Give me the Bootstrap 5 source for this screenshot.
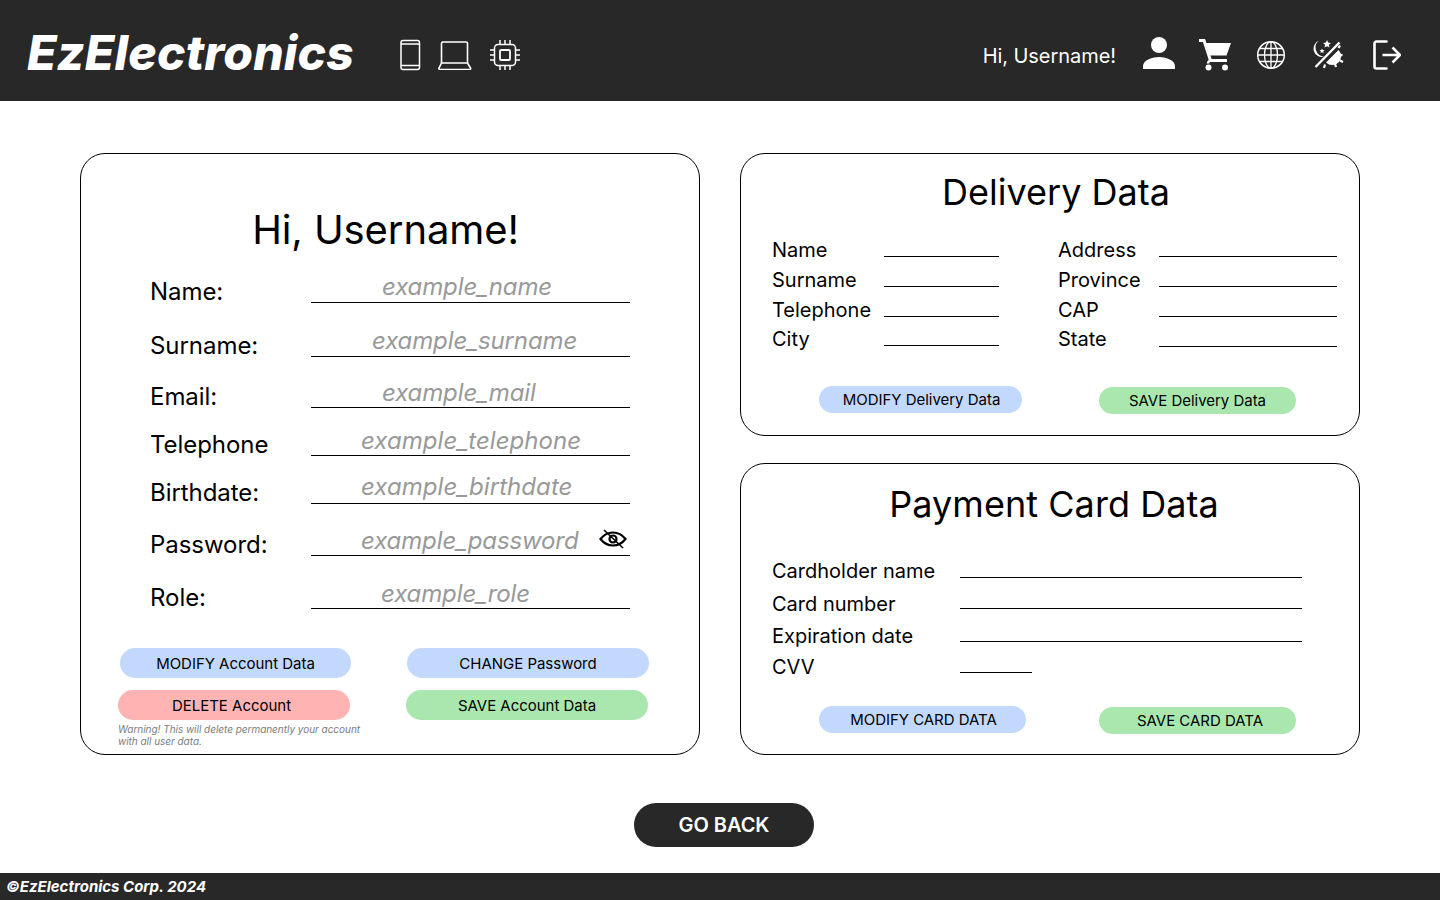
<!DOCTYPE html>
<html lang="en">
<head>
  <meta charset="UTF-8" />
  <title>EzElectronics - Account</title>
  <link href="https://cdn.jsdelivr.net/npm/bootstrap@5.3.0/dist/css/bootstrap.min.css" rel="stylesheet" />
  <style>
    body { font-family: "Inter", "Liberation Sans", sans-serif; background: #fff; color: #000; height: 900px; overflow: hidden; }
    .top-bar { background: #282828; height: 101px; padding: 0 27px; color: #fff; }
    .brand-name { font-size: 48px; font-weight: 800; font-style: italic; color: #fff; padding: 0; margin: 0; line-height: 1; transform: translateY(2px); letter-spacing: .15px; }
    .brand-name:hover { color: #fff; }
    .cat-icons { margin-left: 45px; margin-top: 8px; gap: 17px; }
    .hello-text { font-size: 20px; color: #fff; margin-right: 27px; margin-top: 10px; letter-spacing: -0.05px; }
    .user-icons { gap: 24px; margin-right: 12px; margin-top: 8px; }
    .top-bar svg { display: block; stroke: #fff; fill: none; }
    .page-body { padding: 52px 80px 0; gap: 40px; }
    .panel { border: 1px solid #000; border-radius: 25px; background: #fff; }
    .account-panel { width: 620px; height: 602px; padding: 50px 50px 0 37px; }
    .side-col { width: 620px; gap: 27px; }
    .delivery-panel { height: 283px; padding: 14px 22px 0 31px; }
    .payment-panel { height: 292px; padding: 16px 31px 0 31px; }
    .account-title { font-size: 40px; line-height: 52px; font-weight: 400; margin: 0 0 0 4px; text-align: center; height: 50px; letter-spacing: -0.1px; }
    .side-title { font-size: 36px; line-height: 48px; font-weight: 400; margin: 0; text-align: center; }
    .delivery-title { margin-left: 3px; }
    .payment-title { margin-left: 8px; letter-spacing: .05px; }
    .acct-row { display: flex; align-items: flex-end; padding-left: 32px; position: relative; }
    .acct-row label { width: 161px; font-size: 24px; line-height: 29px; margin: 0 0 -3px; letter-spacing: -0.05px; }
    .acct-row .val { width: 319px; border-bottom: 1px solid #000; font-size: 24px; font-style: italic; color: #999; line-height: 29px; letter-spacing: -0.12px; }
    .acct-row .wide-val { letter-spacing: .05px; }
    .h-54 { height: 54px; } .h-51 { height: 51px; } .h-48 { height: 48px; } .h-52 { height: 52px; } .h-53 { height: 53px; }
    .first-row { height: 49px; }
    .off-50 { padding-left: 50px; } .off-61 { padding-left: 61px; } .off-70 { padding-left: 70px; } .off-71 { padding-left: 71px; }
    .lift-1 { padding-bottom: 1px; } .lift-2 { padding-bottom: 2px; }
    .eye-icon { position: absolute; left: 481px; bottom: 7px; }
    .pill { font-size: 15px; line-height: 18px; color: #000; border: 0; padding: 1px 0 0; display: flex; align-items: center; justify-content: center; letter-spacing: -0.02px; }
    .pill:hover { color: #000; }
    .pill-blue, .pill-blue:hover { background: #c2d8fc; }
    .pill-red, .pill-red:hover { background: #ffb3b3; }
    .pill-green, .pill-green:hover { background: #a9e7ae; }
    .text-left-5 { padding-right: 5px; }
    .text-right-2 { padding-left: 2px; }
    .text-right-5 { padding-left: 5px; }
    .acct-btns { gap: 12px; margin-top: 39px; }
    .acct-btns .pill { height: 30px; }
    .w-231 { width: 231px; } .w-232 { width: 232px; } .w-242 { width: 242px; }
    .nudge-2 { margin-left: 2px; }
    .gap-56 { margin-left: 56px; }
    .warn-note { font-size: 10px; line-height: 12px; font-style: italic; color: #7c7c7c; width: 250px; margin-top: 3px; letter-spacing: -0.03px; }
    .delivery-grid { display: grid; grid-template-columns: 112px 115px 160px 178px; grid-auto-rows: 30px; margin-top: 22px; font-size: 20px; line-height: 24px; }
    .delivery-grid .right-label { margin-left: 59px; width: 101px; }
    .line-cell { border-bottom: 1px solid #000; }
    .ln-16 { height: 17px; } .ln-17 { height: 18px; } .ln-18 { height: 19px; }
    .raise-1 { margin-top: -1px; }
    .card-rows { margin-top: 31px; font-size: 20px; line-height: 24px; }
    .card-line { display: flex; }
    .card-line span { width: 188px; }
    .card-line .line-cell { width: 342px; }
    .card-line .cvv-line { width: 72px; }
    .row-33 { height: 33px; } .row-32 { height: 32px; } .row-31 { height: 31px; } .row-24 { height: 24px; }
    .side-btns { align-items: flex-start; }
    .side-btns .pill { height: 27px; }
    .delivery-btns { margin-top: 28px; }
    .payment-btns { margin-top: 27px; }
    .push-47 { margin-left: 47px; } .push-73 { margin-left: 73px; } .push-77 { margin-left: 77px; }
    .w-203 { width: 203px; } .w-207 { width: 207px; } .w-197 { width: 197px; }
    .drop-1 { margin-top: 1px; }
    .go-back, .go-back:hover { width: 180px; height: 44px; background: #282828; color: #fff; font-size: 20px; font-weight: 600; border: 0; padding: 0; margin: 48px 0 0 634px; display: block; letter-spacing: -0.05px; }
    .bottom-bar { position: absolute; left: 0; right: 0; top: 873px; height: 27px; background: #282828; color: #fff; font-size: 15px; font-weight: 700; font-style: italic; padding: 4px 6px; line-height: 19px; }
  </style>
</head>
<body>
  <nav class="navbar top-bar d-flex align-items-center justify-content-between flex-nowrap">
    <div class="d-flex align-items-center">
      <a class="navbar-brand brand-name" href="#">EzElectronics</a>
      <div class="d-flex align-items-center cat-icons">
        <svg width="22" height="32" viewBox="0 0 22 32" stroke-width="1.5"><rect x="2" y="1.5" width="18.500" height="29" rx="2"/><path d="M2 5h18.500M2 26.500h18.500"/></svg>
        <svg width="34" height="30" viewBox="0 0 34 30" stroke-width="1.600"><path d="M3.500 23V3.500a1.500 1.500 0 0 1 1.500-1.500h23a1.500 1.500 0 0 1 1.500 1.500V23"/><path d="M3.500 23h26l3 5a1 1 0 0 1-1 1.500H2a1 1 0 0 1-1-1.500z"/></svg>
        <svg width="32" height="32" viewBox="0 0 32 32" stroke-width="1.500"><rect x="5.500" y="5.500" width="21" height="21" rx="3.500"/><rect x="11" y="11" width="10" height="10" rx="1" stroke-width="1.800"/><path d="M11 1v4M16 1v4M21 1v4M11 27v4M16 27v4M21 27v4M1 11h4M1 16h4M1 21h4M27 11h4M27 16h4M27 21h4"/></svg>
      </div>
    </div>
    <div class="d-flex align-items-center">
      <span class="hello-text">Hi, Username!</span>
      <div class="d-flex align-items-center user-icons">
        <svg width="32" height="36" viewBox="0 0 32 36"><circle cx="16" cy="8" r="8" fill="#fff" stroke="none"/><path d="M0 32v-3c0-6 10-9 16-9s16 3 16 9v3z" fill="#fff" stroke="none"/></svg>
        <svg width="34" height="32" viewBox="0 0 34 32" stroke-width="3"><path d="M0 1.500h5l6.500 20h16.500" fill="none"/><path d="M6 4h26l-4.500 12.500H10z" fill="#fff" stroke="none"/><path d="M12 21.500a3 3 0 0 0-3 3" fill="none" stroke-width="2.500"/><circle cx="9.500" cy="28.500" r="3" fill="#fff" stroke="none"/><circle cx="26" cy="28.500" r="3" fill="#fff" stroke="none"/></svg>
        <svg width="31" height="30" viewBox="0 0 31 30" stroke-width="1.300"><circle cx="14" cy="15" r="13.300" stroke-width="1.500"/><ellipse cx="14" cy="15" rx="6.500" ry="13.300"/><path d="M14 1.700v26.600M2.500 8.500h23M.7 15h26.600M2.500 21.500h23"/></svg>
        <svg width="37" height="32" viewBox="0 0 37 32"><path d="M7 1.500a9 9 0 0 0 5 16 8 8 0 0 1-10-5A9 9 0 0 1 7 1.500z" fill="#fff" stroke="none"/><path d="M15 1l1.200 2.600 2.800.3-2.100 1.900.6 2.800-2.500-1.400-2.500 1.400.6-2.800-2.100-1.900 2.800-.3z" fill="#fff" stroke="none"/><path d="M10 9.500l.8 1.500 1.700.2-1.200 1.200.3 1.600-1.600-.8-1.500.8.300-1.600-1.200-1.200 1.700-.2z" fill="#fff" stroke="none"/><path d="M3.500 28L27.500 3.500" stroke-width="2.400"/><path d="M26.500 11a8.500 8.500 0 0 1-12.500 12.500z" fill="#fff" stroke="none"/><path d="M26.500 9l1.500-2.500M30.500 16.500l-2.500-1M31 23l-3-1.500M24 28l-1-3M12 29l1-3.500" stroke-width="2.200"/></svg>
        <svg width="28" height="30" viewBox="0 0 28 30" stroke-width="2.600"><path d="M13.500 1.500H3.500a2 2 0 0 0-2 2v23a2 2 0 0 0 2 2h10" stroke-linecap="round"/><path d="M9.500 15H27M19.500 7.500L27 15l-7.500 7.500"/></svg>
      </div>
    </div>
  </nav>

  <div class="d-flex page-body">
    <section class="panel account-panel">
      <h1 class="account-title">Hi, Username!</h1>
      <div class="acct-row first-row"><label>Name:</label><div class="val off-71 lift-1">example_name</div></div>
      <div class="acct-row h-54"><label>Surname:</label><div class="val off-61 lift-1">example_surname</div></div>
      <div class="acct-row h-51"><label>Email:</label><div class="val off-71">example_mail</div></div>
      <div class="acct-row h-48"><label>Telephone</label><div class="val off-50 wide-val">example_telephone</div></div>
      <div class="acct-row h-48"><label>Birthdate:</label><div class="val off-50 lift-2 wide-val">example_birthdate</div></div>
      <div class="acct-row h-52"><label>Password:</label><div class="val off-50">example_password</div>
        <svg class="eye-icon" width="28" height="20" viewBox="0 0 28 20" fill="none" stroke="#000"><path d="M1.500 10C5 5.500 9 3.500 14 3.500S23 5.500 26.500 10C23 14.500 19 16.500 14 16.500S5 14.500 1.500 10z" stroke-width="2.200"/><circle cx="14" cy="10" r="3.500" stroke-width="2.200"/><path d="M5 1l19 18" stroke-width="1.600"/></svg>
      </div>
      <div class="acct-row h-53"><label>Role:</label><div class="val off-70">example_role</div></div>
      <div class="d-flex flex-column acct-btns">
        <div class="d-flex">
          <button class="btn rounded-pill pill pill-blue w-231 nudge-2">MODIFY Account Data</button>
          <button class="btn rounded-pill pill pill-blue w-242 gap-56">CHANGE Password</button>
        </div>
        <div class="d-flex">
          <button class="btn rounded-pill pill pill-red w-232 text-left-5">DELETE Account</button>
          <button class="btn rounded-pill pill pill-green w-242 gap-56">SAVE Account Data</button>
        </div>
      </div>
      <div class="warn-note">Warning! This will delete permanently your account with all user data.</div>
    </section>

    <div class="d-flex flex-column side-col">
      <section class="panel delivery-panel">
        <h2 class="side-title delivery-title">Delivery Data</h2>
        <div class="delivery-grid">
          <span>Name</span><div class="line-cell ln-18"></div><span class="right-label">Address</span><div class="line-cell ln-18"></div>
          <span>Surname</span><div class="line-cell ln-18"></div><span class="right-label">Province</span><div class="line-cell ln-18"></div>
          <span>Telephone</span><div class="line-cell ln-18"></div><span class="right-label">CAP</span><div class="line-cell ln-18"></div>
          <span class="raise-1">City</span><div class="line-cell ln-17"></div><span class="right-label raise-1">State</span><div class="line-cell ln-18"></div>
        </div>
        <div class="d-flex side-btns delivery-btns">
          <button class="btn rounded-pill pill pill-blue w-203 push-47 text-right-2">MODIFY Delivery Data</button>
          <button class="btn rounded-pill pill pill-green w-197 push-77 drop-1">SAVE Delivery Data</button>
        </div>
      </section>
      <section class="panel payment-panel">
        <h2 class="side-title payment-title">Payment Card Data</h2>
        <div class="card-rows">
          <div class="card-line row-33"><span>Cardholder name</span><div class="line-cell ln-18"></div></div>
          <div class="card-line row-32"><span>Card number</span><div class="line-cell ln-16"></div></div>
          <div class="card-line row-31"><span>Expiration date</span><div class="line-cell ln-17"></div></div>
          <div class="card-line row-24"><span>CVV</span><div class="line-cell cvv-line ln-17"></div></div>
        </div>
        <div class="d-flex side-btns payment-btns">
          <button class="btn rounded-pill pill pill-blue w-207 push-47 text-right-2">MODIFY CARD DATA</button>
          <button class="btn rounded-pill pill pill-green w-197 push-73 drop-1 text-right-5">SAVE CARD DATA</button>
        </div>
      </section>
    </div>
  </div>

  <button class="btn rounded-pill go-back">GO BACK</button>
  <footer class="bottom-bar">©EzElectronics Corp. 2024</footer>
</body>
</html>
